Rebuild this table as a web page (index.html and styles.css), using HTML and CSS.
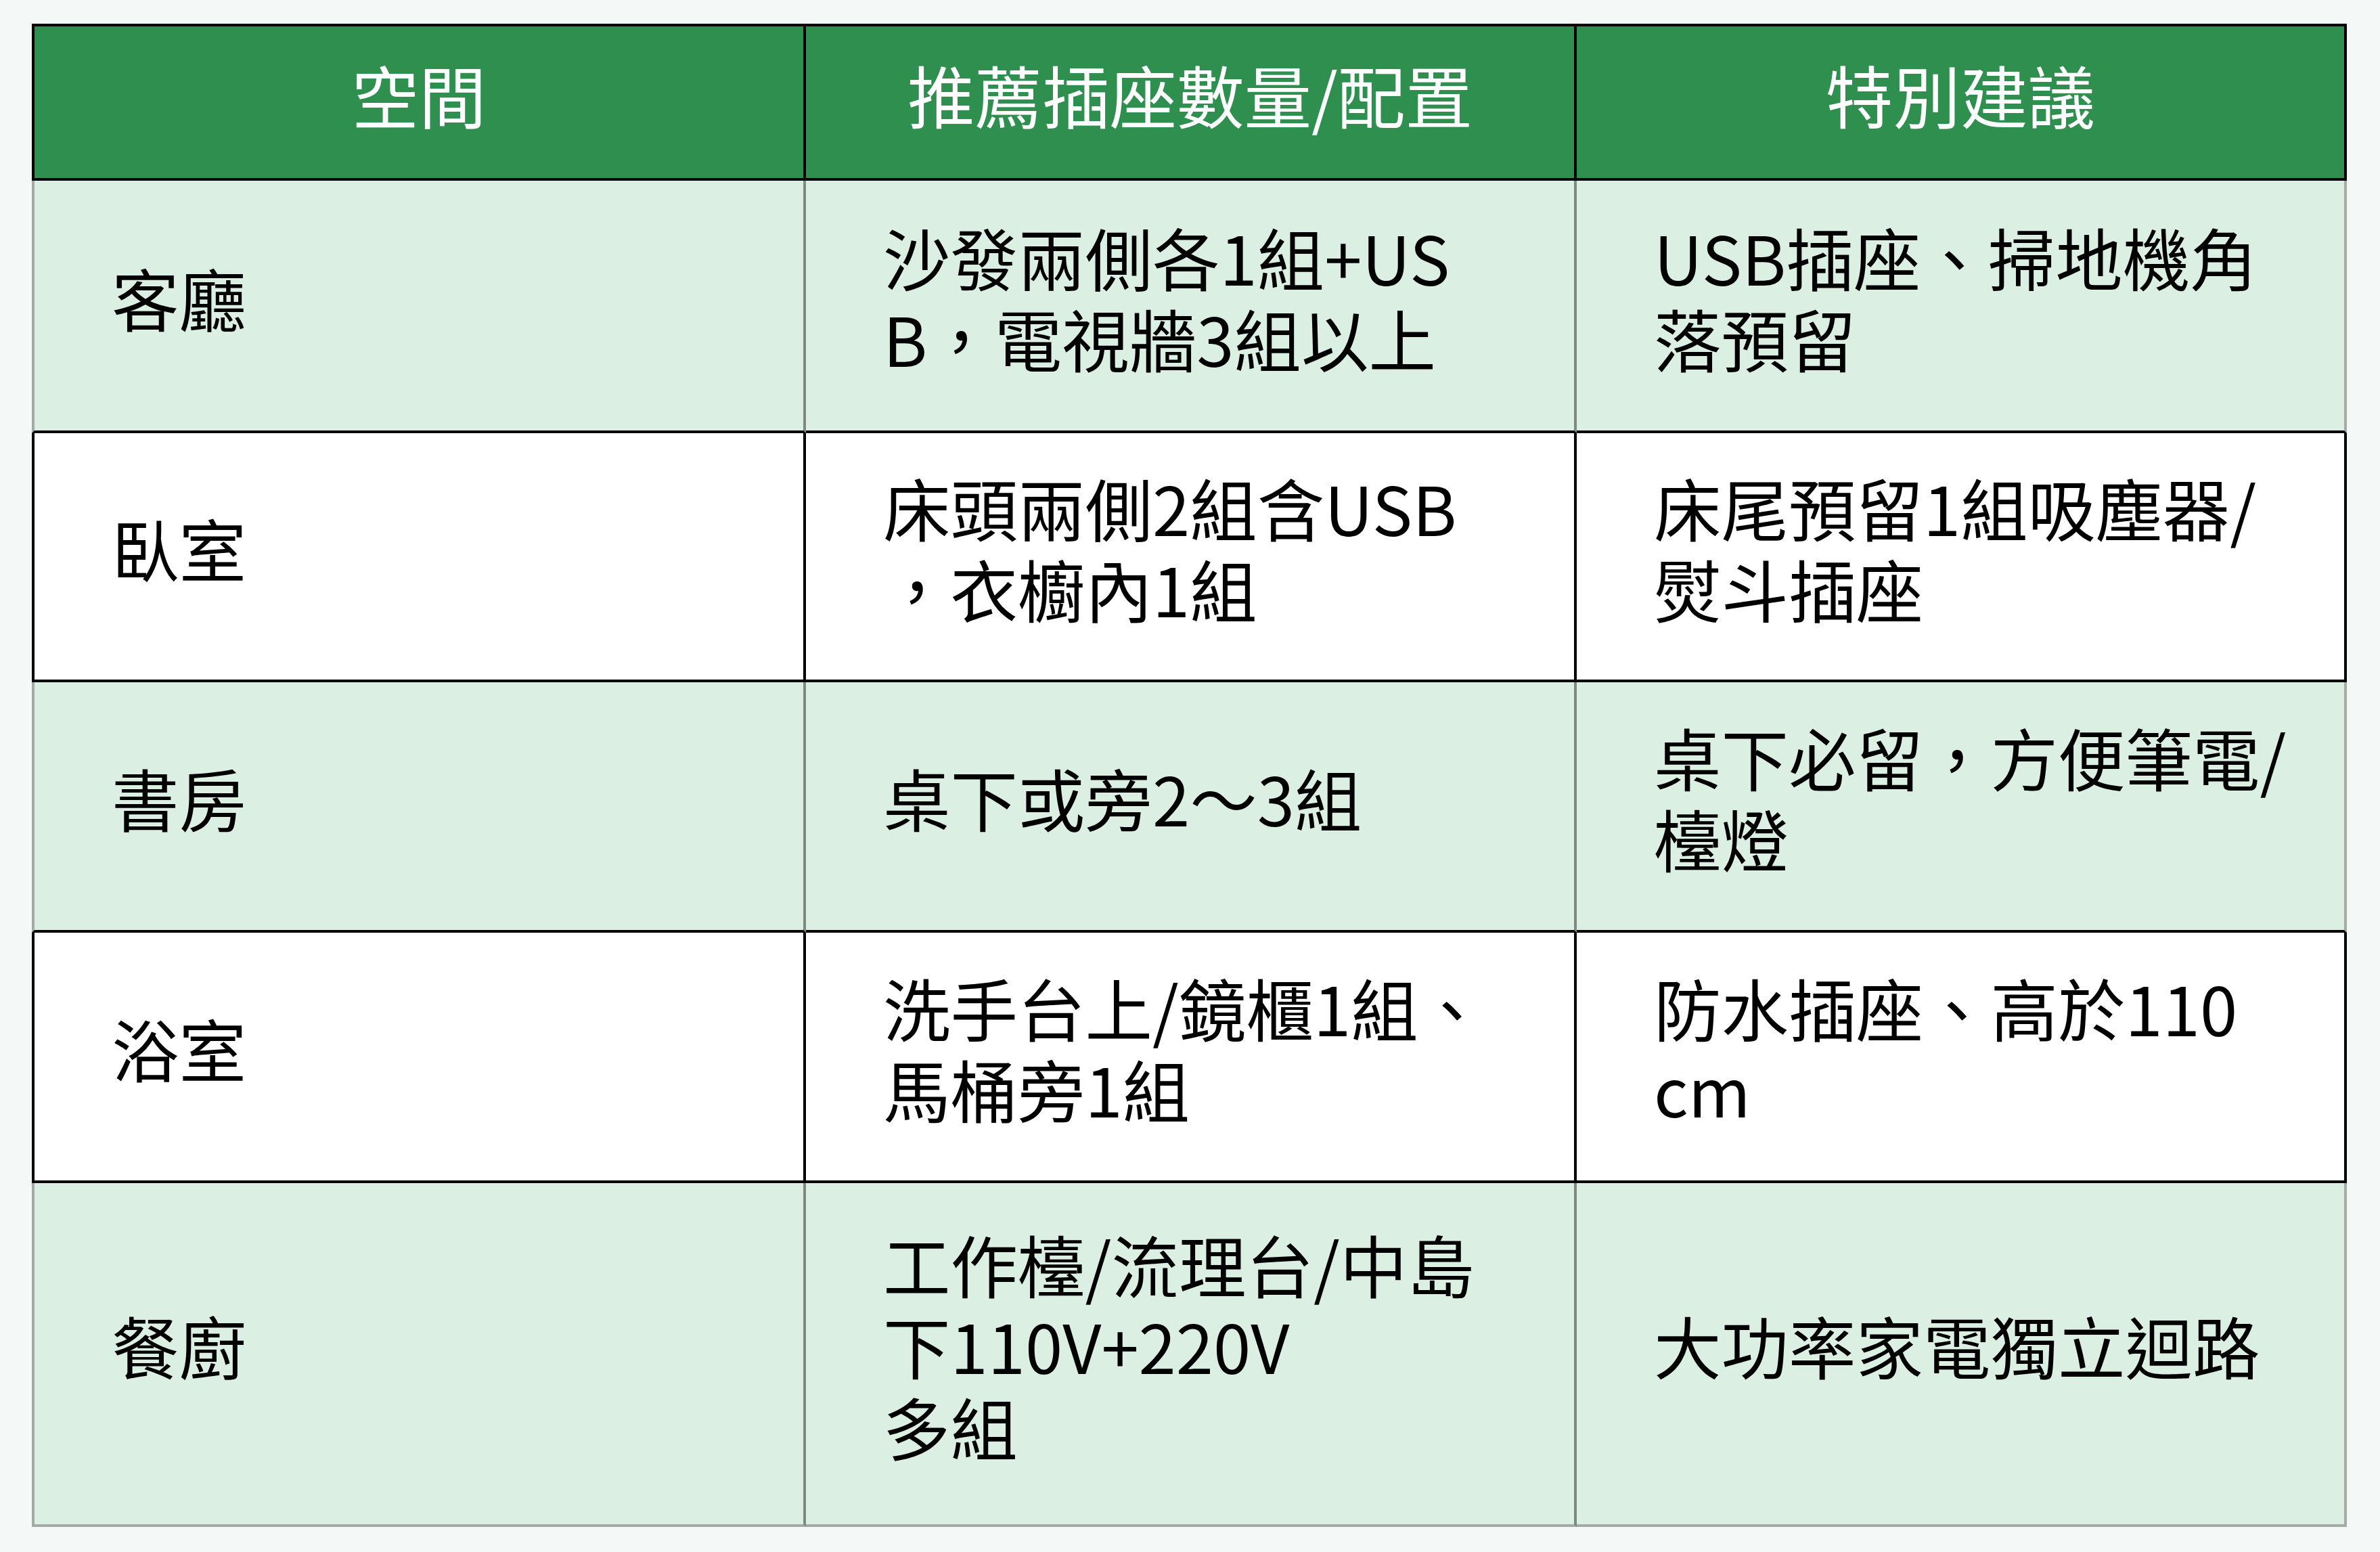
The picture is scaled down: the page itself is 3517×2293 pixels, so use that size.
FILE: index.html
```html
<!DOCTYPE html>
<html lang="zh-Hant">
<head>
<meta charset="utf-8">
<title>插座配置建議</title>
<link rel="stylesheet" href="styles.css">
</head>
<body>
<table class="outlets">
  <colgroup>
    <col class="col-a">
    <col class="col-b">
    <col class="col-c">
  </colgroup>
  <thead>
    <tr class="head-row">
      <th>空間</th>
      <th>推薦插座數量/配置</th>
      <th>特別建議</th>
    </tr>
  </thead>
  <tbody>
    <tr class="row-green row-1">
      <td>客廳</td>
      <td>沙發兩側各1組+US<br>B，電視牆3組以上</td>
      <td>USB插座、掃地機角<br>落預留</td>
    </tr>
    <tr class="row-white row-2">
      <td>臥室</td>
      <td>床頭兩側2組含USB<br>，衣櫥內1組</td>
      <td>床尾預留1組吸塵器/<br>熨斗插座</td>
    </tr>
    <tr class="row-green row-3">
      <td>書房</td>
      <td>桌下或旁2～3組</td>
      <td>桌下必留，方便筆電/<br>檯燈</td>
    </tr>
    <tr class="row-white row-4">
      <td>浴室</td>
      <td>洗手台上/鏡櫃1組、<br>馬桶旁1組</td>
      <td>防水插座、高於110<br>cm</td>
    </tr>
    <tr class="row-green row-5 row-last">
      <td>餐廚</td>
      <td>工作檯/流理台/中島<br>下110V+220V<br>多組</td>
      <td>大功率家電獨立迴路</td>
    </tr>
  </tbody>
</table>
</body>
</html>
```
FILE: styles.css
```css
html, body {
  margin: 0;
  padding: 0;
  background: #f4f8f7;
}

body {
  font-family: "Noto Sans CJK TC", "Noto Sans CJK SC", "Noto Sans", sans-serif;
  color: #000;
}

.outlets {
  margin: 35px 0 0 47px;
  width: 3421px;
  table-layout: fixed;
  border-collapse: separate;
  border-spacing: 0;
  font-size: 99.5px;
  line-height: 120px;
}

.col-a { width: 1144px; }
.col-b { width: 1139px; }
.col-c { width: 1138px; }

.outlets th,
.outlets td {
  border-right: 4px solid #000;
  border-bottom: 4px solid #000;
  padding: 0 0 26px 0;
  vertical-align: middle;
  white-space: nowrap;
  box-sizing: border-box;
}

.outlets th:first-child,
.outlets td:first-child {
  border-left: 4px solid #000;
}

.outlets th {
  border-top: 4px solid #000;
  background: #2e8f4f;
  color: #fff;
  font-weight: 400;
  text-align: center;
  padding-bottom: 24px;
}

.outlets td {
  text-align: left;
  padding-left: 114px;
}

.head-row { height: 232px; }
.row-1 { height: 373px; }
.row-2 { height: 368px; }
.row-3 { height: 370px; }
.row-4 { height: 370px; }
.row-5 { height: 508px; }

.row-green td {
  background: #dcefe3;
  border-right-color: #7e8982;
}

.row-white td {
  background: #fff;
}

.row-green td:first-child {
  border-left-color: #a3aba6;
}

.row-green td:last-child {
  border-right-color: #a3aba6;
}

.row-last td {
  border-bottom-color: #a3aba6;
}
```
